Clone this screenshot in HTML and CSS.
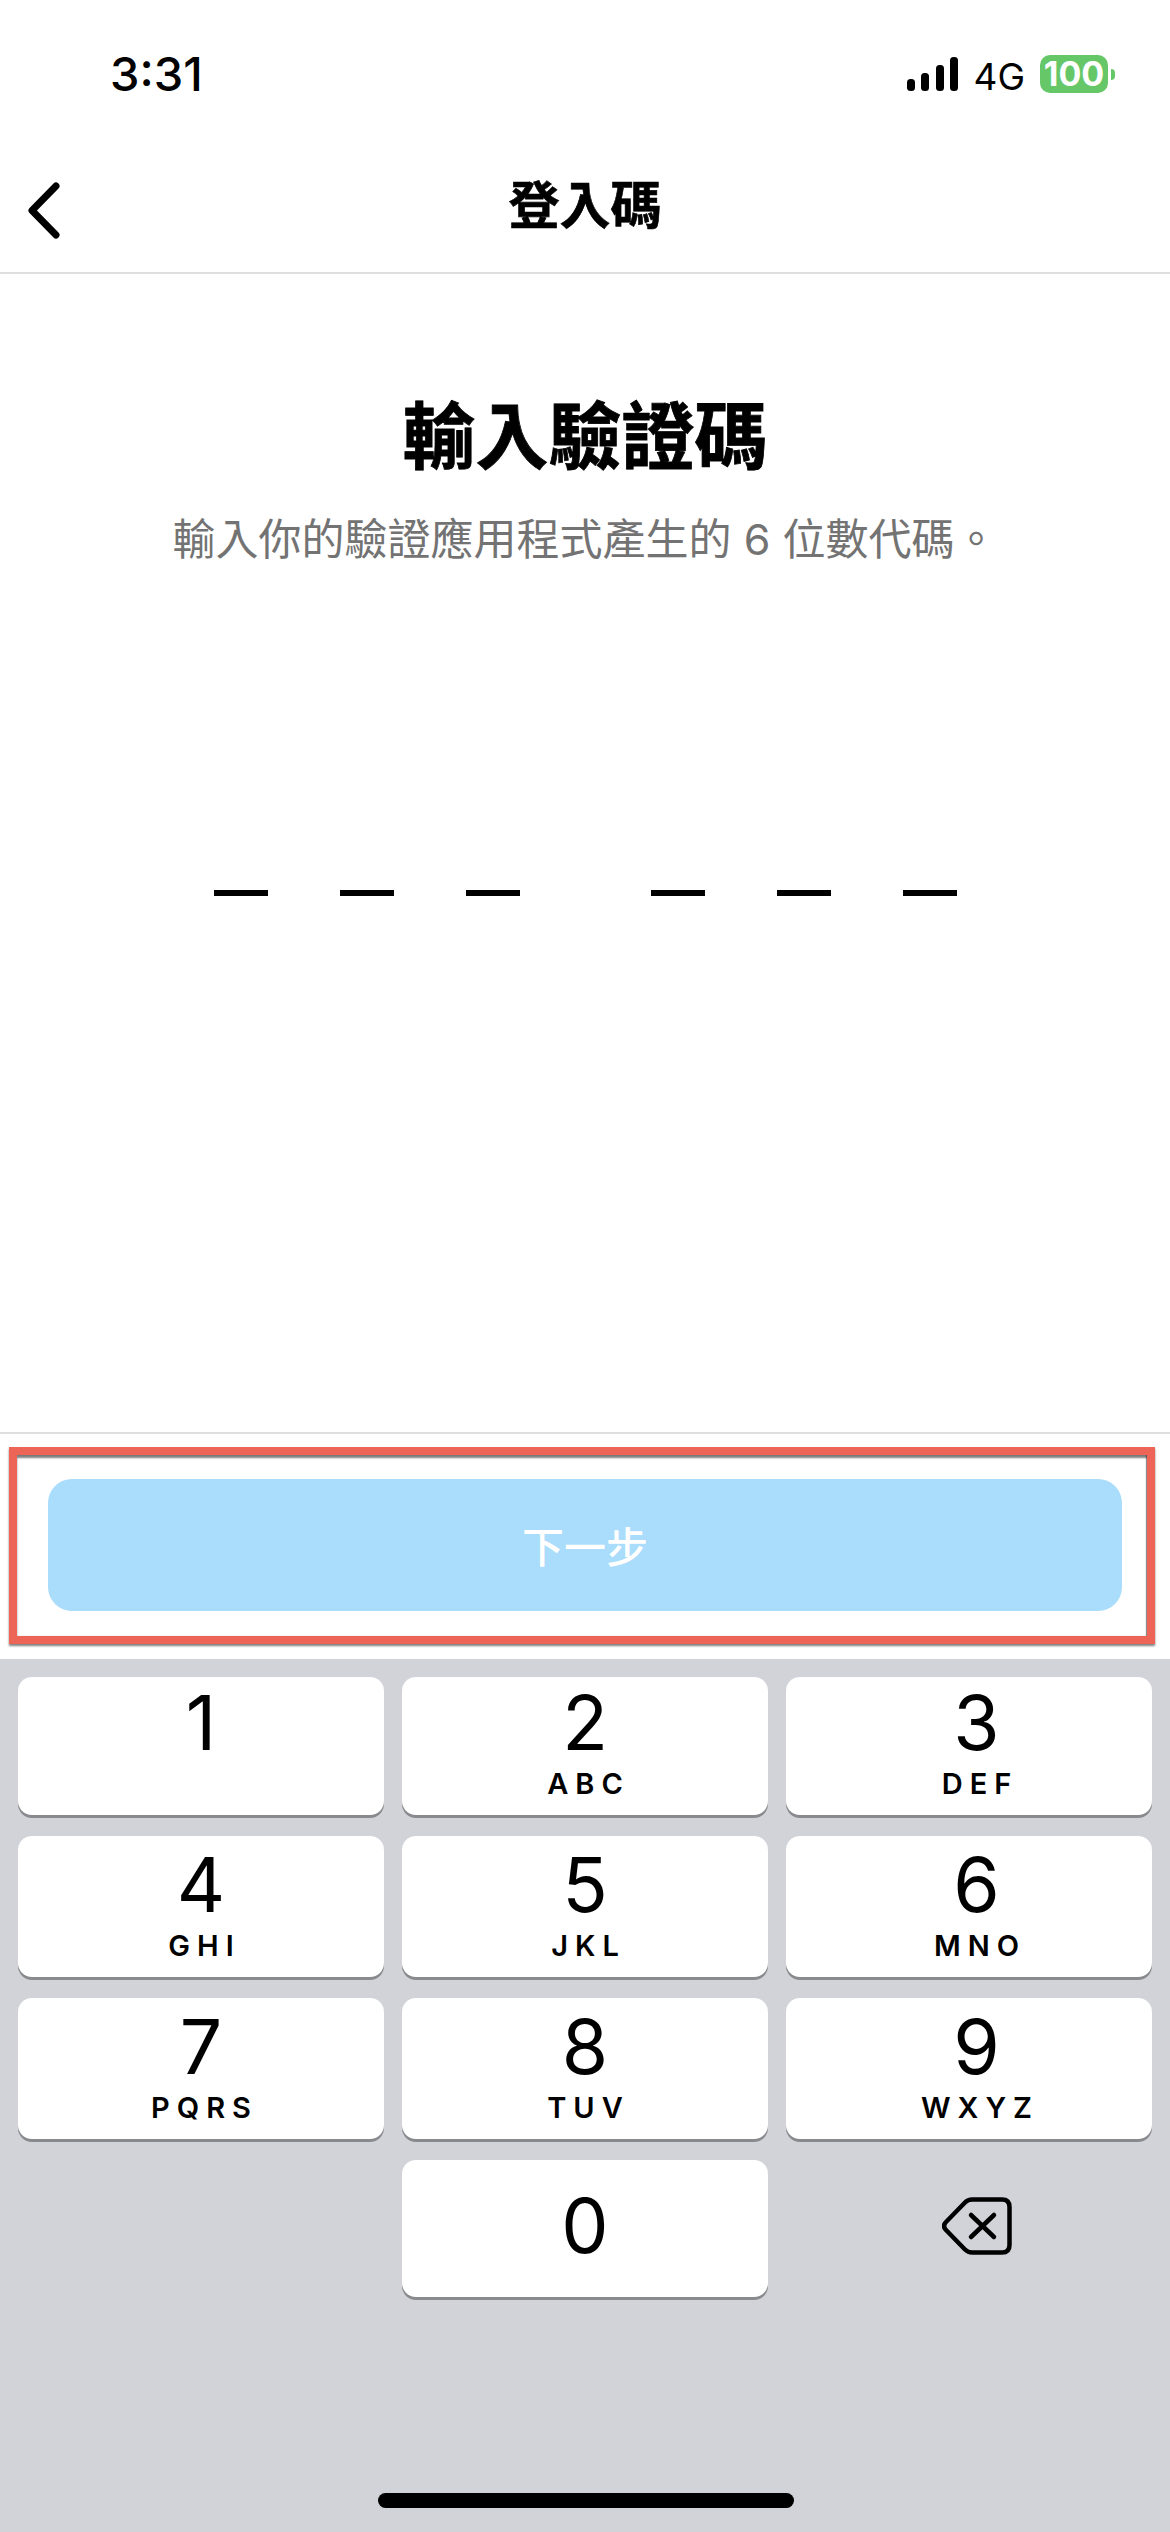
FILE: index.html
```html
<!DOCTYPE html>
<html lang="zh-Hant">
<head>
    <meta charset="UTF-8">
    <meta name="viewport" content="width=device-width, initial-scale=1.0">
    <title>登入碼</title>
    <link rel="stylesheet" href="styles.css">
</head>
<body>
    <div class="screen">
        <div class="status-bar">
            <span class="time">3:31</span>
            <div class="status-icons">
                <svg class="signal" width="51" height="34" viewBox="0 0 51 34" fill="#000"><rect x="0" y="22" width="8" height="12" rx="3.5"/><rect x="14" y="16" width="8" height="18" rx="3.5"/><rect x="29" y="8" width="8" height="26" rx="3.5"/><rect x="43" y="0" width="8" height="34" rx="3.5"/></svg>
                <span class="network">4G</span>
                <div class="battery"><span class="battery-level">100</span><span class="battery-nub"></span></div>
            </div>
        </div>
        <header class="nav-bar">
            <svg class="back" width="32" height="57" viewBox="0 0 32 57" fill="none" stroke="#000" stroke-width="7" stroke-linecap="round" stroke-linejoin="round"><path d="M28 4 4 28.500 28 53"/></svg>
            <h2 class="nav-title">登入碼</h2>
        </header>
        <main class="content">
            <h1 class="heading">輸入驗證碼</h1>
            <p class="subtitle">輸入你的驗證應用程式產生的 6 位數代碼。</p>
            <div class="code-slots">
                <div class="slot-group"><span class="slot"></span><span class="slot"></span><span class="slot"></span></div>
                <div class="slot-group"><span class="slot"></span><span class="slot"></span><span class="slot"></span></div>
            </div>
        </main>
        <div class="action-bar">
            <div class="highlight">
                <button class="next-btn">下一步</button>
            </div>
        </div>
        <div class="keyboard">
            <div class="keys">
                <div class="key key-top"><span class="digit">1</span></div>
                <div class="key key-top"><span class="digit">2</span><span class="letters">ABC</span></div>
                <div class="key key-top key-right"><span class="digit">3</span><span class="letters">DEF</span></div>
                <div class="key"><span class="digit">4</span><span class="letters">GHI</span></div>
                <div class="key"><span class="digit">5</span><span class="letters">JKL</span></div>
                <div class="key key-right"><span class="digit">6</span><span class="letters">MNO</span></div>
                <div class="key"><span class="digit">7</span><span class="letters">PQRS</span></div>
                <div class="key"><span class="digit">8</span><span class="letters">TUV</span></div>
                <div class="key key-right"><span class="digit">9</span><span class="letters">WXYZ</span></div>
                <div class="key-empty"></div>
                <div class="key key-zero"><span class="digit">0</span></div>
                <div class="key-empty key-delete key-right">
                    <svg width="70" height="58" viewBox="0 0 70 58" fill="none" stroke="#000" stroke-width="4.500" stroke-linecap="round" stroke-linejoin="round"><path d="M30 2.500H60Q67.500 2.500 67.500 10V48Q67.500 55.500 60 55.500H30Q26 55.500 23 52.500L4 33Q0 29 4 25L23 5.500Q26 2.500 30 2.500Z"/><path d="M29 18 52 40M52 18 29 40"/></svg>
                </div>
            </div>
            <div class="home-indicator"></div>
        </div>
    </div>
</body>
</html>
```

FILE: styles.css
```css
* {
    box-sizing: border-box;
}
html, body {
    margin: 0;
    padding: 0;
}
body {
    font-family: Inter, 'Noto Sans CJK TC', sans-serif;
    background-color: white;
    color: black;
}
.screen {
    width: 1170px;
    height: 2532px;
    display: flex;
    flex-direction: column;
    overflow: hidden;
}
.status-bar {
    height: 152px;
    padding: 46px 55px 0 110px;
    display: flex;
    justify-content: space-between;
    align-items: flex-start;
}
.time {
    font-size: 47px;
    font-weight: 500;
    line-height: 56px;
}
.status-icons {
    display: flex;
    align-items: flex-start;
    padding-top: 9px;
}
.signal {
    margin-top: 2px;
    margin-right: 15px;
}
.network {
    font-size: 37px;
    line-height: 44px;
    margin-right: 15px;
}
.battery {
    display: flex;
    align-items: center;
}
.battery-level {
    width: 68px;
    height: 38px;
    background-color: #66c769;
    border-radius: 10px;
    color: white;
    font-size: 34px;
    font-weight: 700;
    line-height: 38px;
    text-align: center;
}
.battery-nub {
    width: 4px;
    height: 11px;
    margin-left: 3px;
    background-color: #66c769;
    border-radius: 0 6px 6px 0;
}
.nav-bar {
    height: 122px;
    border-bottom: 2px solid #dedede;
    padding-left: 28px;
    display: flex;
    align-items: center;
    position: relative;
}
.back {
    margin-top: -3px;
}
.nav-title {
    position: absolute;
    left: 0;
    right: 0;
    top: 22px;
    margin: 0;
    font-size: 51px;
    font-weight: 700;
    -webkit-text-stroke: 0.6px black;
    line-height: 64px;
    text-align: center;
}
.content {
    flex-grow: 1;
    text-align: center;
    padding-top: 115px;
}
.heading {
    margin: 0;
    font-size: 73px;
    font-weight: 700;
    -webkit-text-stroke: 0.8px black;
    line-height: 96px;
}
.subtitle {
    margin: 24px 0 0;
    font-size: 43px;
    line-height: 60px;
    color: #737373;
}
.code-slots {
    margin-top: 321px;
    display: flex;
    justify-content: center;
    gap: 131px;
}
.slot-group {
    display: flex;
    gap: 72px;
}
.slot {
    width: 54px;
    height: 6px;
    background-color: black;
}
.action-bar {
    height: 227px;
    border-top: 2px solid #dedede;
    padding: 13px 15px 0 9px;
}
.highlight {
    height: 197px;
    border: 8px solid #ec6557;
    box-shadow: 0 2px 2px rgba(0, 0, 0, 0.5), inset 0 3px 2px rgba(0, 0, 0, 0.5), inset -1px 0 1px rgba(0, 0, 0, 0.4);
    padding: 24px 25px 0 31px;
}
.next-btn {
    display: block;
    width: 100%;
    height: 132px;
    background-color: #aadcfb;
    color: white;
    border: none;
    border-radius: 24px;
    font-family: inherit;
    font-size: 42px;
    font-weight: 500;
    padding: 0 0 2px;
}
.keyboard {
    height: 873px;
    background-color: #d1d3d9;
    padding: 18px 18px 0;
    position: relative;
}
.keys {
    display: grid;
    grid-template-columns: repeat(3, 366px);
    grid-template-rows: 138px 141px 141px 137px;
    gap: 21px 18px;
}
.key {
    background-color: white;
    border-radius: 14px;
    box-shadow: 0 3px 0 #898a8d;
    display: flex;
    flex-direction: column;
    align-items: center;
}
.key-right {
    padding-left: 15px;
}
.digit {
    font-size: 75px;
    line-height: 76px;
    margin-top: 11px;
}
.key-top .digit {
    margin-top: 8px;
}
.letters {
    font-size: 29px;
    font-weight: 600;
    line-height: 34px;
    letter-spacing: 7px;
    margin-top: 6px;
    margin-right: -7px;
}
.key-zero .digit {
    margin-top: 28px;
}
.key-delete {
    display: flex;
    align-items: center;
    justify-content: center;
    padding-bottom: 6px;
}
.home-indicator {
    position: absolute;
    left: 378px;
    bottom: 24px;
    width: 416px;
    height: 15px;
    background-color: black;
    border-radius: 8px;
}
```
